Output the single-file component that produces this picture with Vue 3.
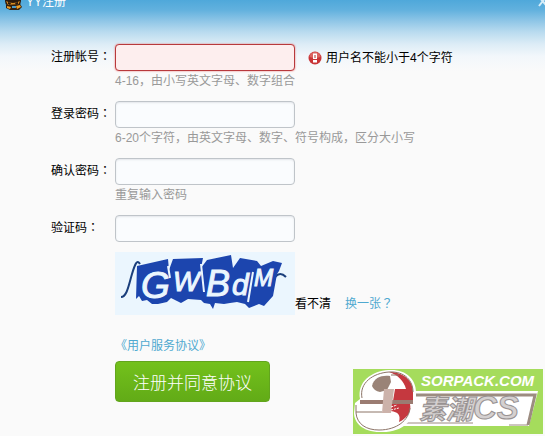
<template>
  <div class="register-page">
    <header class="title-bar">
      <svg class="app-logo" width="18" height="18" viewBox="0 0 18 18" aria-hidden="true">
        <ellipse cx="9" cy="8" rx="8" ry="7" fill="#2b1a0c" />
        <path d="M2 8q7 4 14 0l-2 4q-5 3-10 0z" fill="#d98c22" />
        <path d="M4 9l3 1-1 2-2-1zM11 10l3-1 0 2-2 1z" fill="#2b1a0c" />
        <path d="M2 12l14-1 2 3-3 3-9 0-4-2z" fill="#32200f" />
        <path d="M3 13l4 1-1 2-3-1zM12 13l4-1 1 2-4 2z" fill="#f0a028" />
        <path d="M8 13h4v2H8z" fill="#4b9bc9" />
      </svg>
      <h1 class="title">YY注册</h1>
      <button class="close" type="button" aria-label="关闭">
        <svg width="10" height="10" viewBox="0 0 10 10">
          <path d="M2 0l7 8M9 0L2 9" stroke="#d6edf8" stroke-width="2" />
        </svg>
      </button>
    </header>

    <form class="form" @submit.prevent>
      <div v-for="field in fields" :key="field.id" class="row">
        <label class="label" :for="field.id">{{ field.label }}</label>
        <div class="field">
          <div class="control">
            <input
              :id="field.id"
              v-model="field.value"
              class="text-input"
              :class="{ invalid: field.error }"
              :type="field.type"
            />
            <span v-if="field.error" class="error">
              <svg width="14" height="14" viewBox="0 0 14 14" aria-hidden="true">
                <circle cx="7" cy="7" r="6.5" fill="#c93436" />
                <path d="M1.5 6a5.5 5 0 0 1 11 0q-5.5 2-11 0z" fill="#dc6460" />
                <path d="M5 2.5h4v5.500H5zM5 9h4v2.500H5z" fill="#fff" />
                <path d="M6.500 4h1v3h-1z" fill="#a33" />
              </svg>
              {{ field.error }}
            </span>
          </div>
          <p v-if="field.hint" class="hint">{{ field.hint }}</p>
        </div>
      </div>

      <div class="extra">
        <div class="captcha">
          <svg class="captcha-image" width="180" height="63" viewBox="0 0 180 63" role="img" aria-label="验证码">
            <rect width="180" height="63" fill="#ebf6fe" />
            <path d="M6 45c6 0 8-13 11-23s5-15 8-10M160 25q5-6 11 0" fill="none" stroke="#1b3f7c" stroke-width="2" />
            <path
              d="M22 14l31-7 1 11 4-11 30-1-2 10 6-8 24-5 2 13 7-10 17 3 4 5 12-5 9 2-3 8-2 3-4 22-9 10-5-2-10 4-4-4-8-2-7 1-6 1-9-1-2 6-3-5-6-1-3-3-13-1-7 4-10-5-4 4-9 2-6 0-5-4-5 1-3-5-3 3z"
              fill="#1c45ae"
            />
            <path d="M53 14l2 12M86 12l3 28M138 20l-5 30" stroke="#ebf6fe" stroke-width="2" fill="none" />
            <g class="captcha-text">
              <text x="26" y="46" font-size="37">G</text>
              <text x="58" y="39" font-size="28">W</text>
              <text x="91" y="44" font-size="36">B</text>
              <text x="117" y="43" font-size="30">d</text>
              <text x="139" y="34" font-size="23">M</text>
            </g>
          </svg>
          <span class="captcha-tip">看不清</span>
          <a class="link" href="#">换一张？</a>
        </div>
        <a class="link agreement" href="#">《用户服务协议》</a>
        <button class="submit" type="submit">注册并同意协议</button>
      </div>
    </form>

    <svg class="watermark" width="190" height="65" viewBox="0 0 190 65" role="img" aria-label="SORPACK.COM">
      <rect width="190" height="65" fill="#a5dc5c" />
      <path d="M56 22h129l-9 35H50z" fill="#fff" />
      <path d="M62 26h120l-7 30" fill="none" stroke="#9c8c80" stroke-width="3" />
      <path d="M50 54h70M156 56h19" fill="none" stroke="#9c8c80" stroke-width="1" />
      <path
        d="M36 1c17-1 27 9 27 22v9l-3 4c2 15-10 28-33 27C9 63 1 53 1 44l1-10 5-4C4 13 18 2 36 1z"
        fill="#fff"
      />
      <path d="M36 3c14 0 24 8 24 20v9H40l2-12h11C51 12 45 6 36 3z" fill="#c5383f" />
      <path d="M19 17C21 8 29 6 37 7l1 6-4 8-7 2q-6-1-8-6z" fill="#9a8377" />
      <path d="M7 31h53v4H7z" fill="#9b7c72" />
      <path d="M31 20h10l-3 24h-9z" fill="#ccb2aa" />
      <path d="M39 35h18c2 8-4 15-11 18 2-7-1-10-8-11z" fill="#c5383f" />
      <path d="M38 38l6-2M38 41l8-2" fill="none" stroke="#fff" stroke-width="1" stroke-dasharray="2 1" />
      <path
        d="M9 29C6 14 20 4 36 3s24 9 24 20M3 43h26M3 36v8c1 11 10 17 23 17 18 0 30-10 31-22M38 6h8"
        fill="none"
        stroke="#8c7467"
        stroke-width="1"
      />
      <text class="watermark-domain" x="68" y="17">SORPACK.COM</text>
      <text class="watermark-name" x="66" y="50">素潮<tspan class="watermark-latin">CS</tspan></text>
    </svg>
  </div>
</template>

<script setup>
import { reactive } from 'vue'

const fields = reactive([
  {
    id: 'account',
    label: '注册帐号：',
    type: 'text',
    value: '',
    hint: '4-16，由小写英文字母、数字组合',
    error: '用户名不能小于4个字符'
  },
  {
    id: 'password',
    label: '登录密码：',
    type: 'password',
    value: '',
    hint: '6-20个字符，由英文字母、数字、符号构成，区分大小写'
  },
  {
    id: 'confirm',
    label: '确认密码：',
    type: 'password',
    value: '',
    hint: '重复输入密码'
  },
  { id: 'code', label: '验证码：', type: 'text', value: '' }
])
</script>

<style>
body {
  margin: 0;
}
</style>

<style scoped>
.register-page {
  position: relative;
  box-sizing: border-box;
  min-height: 100vh;
  overflow: hidden;
  background: linear-gradient(
    to bottom,
    #4fa8da 0,
    #62b1de 10px,
    #8bc4e6 20px,
    #b9dbef 32px,
    #dcecf6 44px,
    #f2f7fb 56px,
    #fafafa 72px
  );
  color: #000;
  font-family: "Liberation Sans", "Noto Sans CJK SC", sans-serif;
  font-size: 12px;
  line-height: 18px;
}

.title-bar {
  display: flex;
  align-items: center;
  height: 4px;
  padding-left: 4px;
}

.app-logo {
  flex: none;
}

.title {
  flex: 1;
  margin: 0 0 0 4px;
  color: #fff;
  font-size: 12px;
  font-weight: normal;
}

.close {
  flex: none;
  width: 8px;
  height: 10px;
  padding: 0;
  border: 0;
  background: none;
}

.close svg {
  display: block;
}

.form {
  padding: 40px 0 32px 51px;
}

.row {
  display: flex;
  align-items: flex-start;
  min-height: 57px;
}

.label {
  flex: none;
  width: 64px;
  font-family: "Liberation Sans", "Noto Sans CJK TC", sans-serif;
  line-height: 26px;
}

.control {
  display: flex;
  align-items: center;
}

.text-input {
  box-sizing: border-box;
  width: 180px;
  height: 27px;
  padding: 0 6px;
  border: 1px solid #bfc4c9;
  border-radius: 4px;
  outline: none;
  background: #fafcfe;
  box-shadow: inset 0 1px 2px #e3e6ea;
  font: inherit;
}

.text-input.invalid {
  border-color: #b8393c;
  background: #fdeeee;
  box-shadow: 0 0 2px #e87070;
}

.error {
  display: flex;
  align-items: center;
  gap: 4px;
  margin-left: 13px;
}

.hint {
  margin: 1px 0 0;
  color: #999;
}

.extra {
  display: flex;
  flex-direction: column;
  align-items: flex-start;
  margin: -20px 0 0 64px;
}

.captcha {
  display: flex;
  align-items: flex-end;
}

.captcha-image {
  display: block;
}

.captcha-text {
  fill: #ebf6fe;
  stroke: #ebf6fe;
  stroke-width: 1px;
  font-family: "Liberation Sans", sans-serif;
  font-style: italic;
}

.captcha-tip {
  margin: 0 14px 2px 0;
}

.captcha .link {
  margin-bottom: 2px;
}

.link {
  color: #4fa9d0;
  font-family: "Liberation Sans", "Noto Sans CJK TC", sans-serif;
  text-decoration: none;
}

.agreement {
  margin-top: 22px;
}

.submit {
  height: 41px;
  margin-top: 6px;
  padding: 0 17px;
  border: 1px solid #62a51d;
  border-radius: 4px;
  background: linear-gradient(#73c11c, #62ab17);
  color: #fff;
  font-family: "Noto Sans CJK SC", sans-serif;
  font-size: 17px;
  font-weight: 300;
}

.watermark {
  position: absolute;
  right: 2px;
  bottom: 2px;
}

.watermark-domain {
  fill: #fff;
  font-family: "Liberation Sans", sans-serif;
  font-size: 15px;
  font-style: italic;
  font-weight: bold;
}

.watermark-name {
  fill: #d4d0d0;
  stroke: #989292;
  stroke-width: 1px;
  font-family: "Liberation Sans", "Noto Sans CJK SC", sans-serif;
  font-size: 27px;
  font-style: italic;
  font-weight: bold;
}

.watermark-latin {
  font-size: 33px;
}
</style>
